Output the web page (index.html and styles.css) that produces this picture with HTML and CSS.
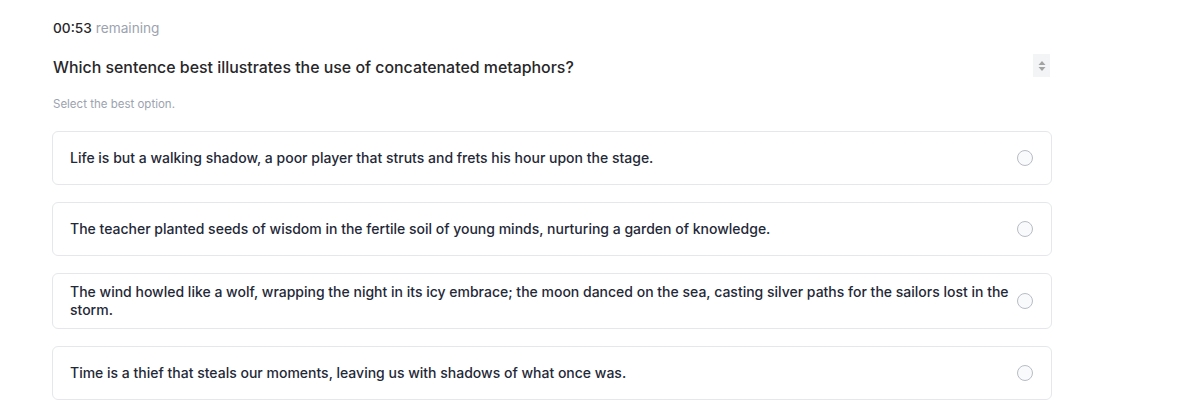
FILE: index.html
```html
<!DOCTYPE html>
<html>
<head>
<meta charset="utf-8">
<link rel="stylesheet" href="styles.css">
</head>
<body>
<div class="quiz">
  <div class="timer"><span class="time">00:53</span> <span class="rem">remaining</span></div>
  <div class="qrow">
    <div class="question">Which sentence best illustrates the use of concatenated metaphors?</div>
    <div class="spinner">
      <svg width="8" height="12" viewBox="0 0 8 12"><path d="M4 1 L7.5 5 H0.5 Z" fill="#a3a3a3"/><path d="M4 11 L7.5 7 H0.5 Z" fill="#a3a3a3"/></svg>
    </div>
  </div>
  <div class="hint">Select the best option.</div>
  <div class="options">
    <label class="option"><span class="text">Life is but a walking shadow, a poor player that struts and frets his hour upon the stage.</span><span class="radio"></span></label>
    <label class="option"><span class="text">The teacher planted seeds of wisdom in the fertile soil of young minds, nurturing a garden of knowledge.</span><span class="radio"></span></label>
    <label class="option"><span class="text">The wind howled like a wolf, wrapping the night in its icy embrace; the moon danced on the sea, casting silver paths for the sailors lost in the storm.</span><span class="radio"></span></label>
    <label class="option"><span class="text">Time is a thief that steals our moments, leaving us with shadows of what once was.</span><span class="radio"></span></label>
  </div>
</div>
</body>
</html>
```
FILE: styles.css
```css
html, body {
  margin: 0;
  padding: 0;
  background: #ffffff;
}
body {
  font-family: Inter, "Noto Sans", sans-serif;
  color: #1f2937;
}
.quiz {
  width: 1000px;
  padding: 18px 0 0 52px;
}
.timer {
  font-size: 13.7px;
  line-height: 20px;
  padding-left: 1px;
}
.timer .time {
  color: #27272a;
  font-weight: 500;
}
.timer .rem {
  color: #9ca3af;
}
.qrow {
  display: flex;
  align-items: flex-start;
  justify-content: space-between;
  margin-top: 18px;
  padding-left: 1px;
}
.question {
  font-size: 15.9px;
  line-height: 24px;
  font-weight: 500;
  color: #27272a;
}
.spinner {
  width: 17px;
  height: 23px;
  margin-top: -2px;
  margin-right: 2px;
  background: #f3f4f6;
  display: flex;
  align-items: center;
  justify-content: center;
}
.hint {
  margin-top: 16px;
  font-size: 11.5px;
  line-height: 16px;
  color: #9ca3af;
  padding-left: 1px;
}
.options {
  display: flex;
  flex-direction: column;
  gap: 17px;
  margin-top: 19px;
}
.option {
  display: flex;
  align-items: center;
  justify-content: space-between;
  gap: 6px;
  min-height: 54px;
  box-sizing: border-box;
  padding: 9px 16px 9px 17px;
  border: 1px solid #e5e7eb;
  border-radius: 6px;
  background: #ffffff;
}
.text {
  font-size: 14px;
  line-height: 18px;
  font-weight: 500;
  color: #1f2937;
}
.radio {
  flex: none;
  width: 16px;
  height: 16px;
  box-sizing: border-box;
  border: 1.5px solid #b8bcc4;
  border-radius: 50%;
  background: #f9fafb;
  margin-right: 2px;
}
```
